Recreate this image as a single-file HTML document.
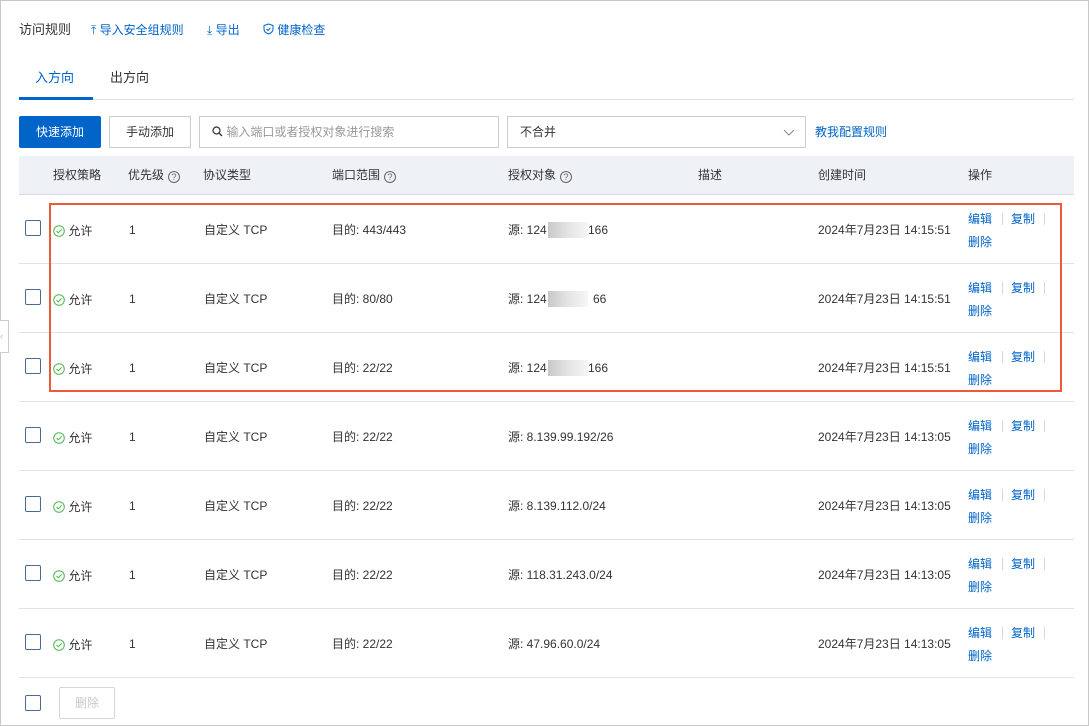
<!DOCTYPE html>
<html><head><meta charset="utf-8"><style>
*{margin:0;padding:0;box-sizing:border-box}
body{width:1089px;height:726px;background:#fff;font-family:"Liberation Sans","Noto Sans CJK SC",sans-serif;font-size:12px;color:#333;position:relative;overflow:hidden}
.frame{position:absolute;left:0;top:0;width:1089px;height:726px;border:1px solid #c8c8c8}
.a{position:absolute;white-space:nowrap;line-height:16px}
.blue{color:#0064c8}
.cb{position:absolute;width:16px;height:16px;border:1px solid #4a6a8f;border-radius:2px;background:#fff}
.row{position:absolute;left:19px;width:1055px;height:69px;border-bottom:1px solid #e3e3e3}
.q{display:inline-block;width:12px;height:12px;border:1px solid #666;border-radius:50%;font-size:9px;line-height:10px;text-align:center;margin-left:4px;vertical-align:-1px;color:#666}
.sep{position:absolute;width:1px;height:12px;background:#d8d8d8}
</style></head><body>
<div class="frame"></div>
<div class="a" style="left:19px;top:22px;font-size:13px;color:#333">访问规则</div>
<div class="a blue" style="left:91px;top:22px">⤒ 导入安全组规则</div>
<div class="a blue" style="left:207px;top:22px">⤓ 导出</div>
<div class="a blue" style="left:263px;top:22px">
<svg width="11" height="12" viewBox="0 0 11 12" style="vertical-align:-1px"><path d="M5.5 1L10 2.5V6c0 2.5-2 4.2-4.5 5C3 10.2 1 8.5 1 6V2.5z M3.5 6l1.5 1.5L7.5 4.8" fill="none" stroke="#0064c8" stroke-width="1"/></svg> 健康检查</div>
<div class="a blue" style="left:35px;top:70px;font-size:13px">入方向</div>
<div class="a" style="left:110px;top:70px;font-size:13px">出方向</div>
<div class="a" style="left:19px;top:99px;width:1055px;height:1px;background:#e3e3e3"></div>
<div class="a" style="left:19px;top:97px;width:74px;height:3px;background:#0064c8"></div>
<div class="a" style="left:19px;top:116px;width:82px;height:32px;background:#0064c8;color:#fff;text-align:center;line-height:32px;border-radius:2px">快速添加</div>
<div class="a" style="left:109px;top:116px;width:82px;height:32px;border:1px solid #ccc;text-align:center;line-height:30px">手动添加</div>
<div class="a" style="left:199px;top:116px;width:300px;height:32px;border:1px solid #ccc;line-height:30px;padding-left:12px;color:#999">
<svg width="11" height="11" viewBox="0 0 11 11" style="vertical-align:-1px"><circle cx="4.5" cy="4.5" r="3.5" fill="none" stroke="#333" stroke-width="1.2"/><path d="M7 7l3 3" stroke="#333" stroke-width="1.3"/></svg> 输入端口或者授权对象进行搜索</div>
<div class="a" style="left:507px;top:116px;width:299px;height:32px;border:1px solid #ccc;line-height:30px;padding-left:12px">不合并
<svg width="12" height="8" viewBox="0 0 12 8" style="position:absolute;right:10px;top:12px"><path d="M1 1l5 5 5-5" fill="none" stroke="#888" stroke-width="1"/></svg></div>
<div class="a blue" style="left:815px;top:124px">教我配置规则</div>
<div class="a" style="left:19px;top:156px;width:1055px;height:39px;background:#eef1f6;border-bottom:1px solid #d8dbe0"></div>
<div class="a" style="left:53px;top:167px">授权策略</div>
<div class="a" style="left:128px;top:167px">优先级<span class="q">?</span></div>
<div class="a" style="left:203px;top:167px">协议类型</div>
<div class="a" style="left:332px;top:167px">端口范围<span class="q">?</span></div>
<div class="a" style="left:508px;top:167px">授权对象<span class="q">?</span></div>
<div class="a" style="left:698px;top:167px">描述</div>
<div class="a" style="left:818px;top:167px">创建时间</div>
<div class="a" style="left:968px;top:167px">操作</div>
<div id="rows"></div>
<script>
var d=[["443/443","124.xxx.166","14:15:51"],["80/80","124.xx66","14:15:51"],["22/22","124.xxx.166","14:15:51"],["22/22","8.139.99.192/26","14:13:05"],["22/22","8.139.112.0/24","14:13:05"],["22/22","118.31.243.0/24","14:13:05"],["22/22","47.96.60.0/24","14:13:05"]];
var h="";
d.forEach(function(r,i){var t=195+69*i;var y=t+27;
h+='<div class="row" style="top:'+t+'px"></div>';
h+='<div class="cb" style="left:25px;top:'+(t+25)+'px"></div>';
h+='<div class="a" style="left:53px;top:'+(y+1)+'px"><svg width="12" height="12" viewBox="0 0 12 12" style="vertical-align:-2px"><circle cx="6" cy="6" r="5.3" fill="none" stroke="#4cb84c" stroke-width="1"/><path d="M3.5 6l1.8 1.8L8.6 4.4" fill="none" stroke="#4cb84c" stroke-width="1"/></svg> 允许</div>';
h+='<div class="a" style="left:129px;top:'+y+'px">1</div>';
h+='<div class="a" style="left:204px;top:'+y+'px">自定义 TCP</div>';
h+='<div class="a" style="left:332px;top:'+y+'px">目的: '+r[0]+'</div>';
if(i<3){h+='<div class="a" style="left:508px;top:'+y+'px">源: 124</div><div class="a" style="left:548px;top:'+(y)+'px;width:40px;height:16px;background:linear-gradient(90deg,#c8c8c8,#e4e4e4,#f6f6f6)"></div><div class="a" style="left:'+(i==1?593:588)+'px;top:'+y+'px">'+(i==1?'66':'166')+'</div>';}
else h+='<div class="a" style="left:508px;top:'+y+'px">源: '+r[1]+'</div>';
h+='<div class="a" style="left:818px;top:'+y+'px">2024年7月23日 '+r[2]+'</div>';
h+='<div class="a blue" style="left:968px;top:'+(t+16)+'px">编辑</div><div class="sep" style="left:1002px;top:'+(t+18)+'px"></div><div class="a blue" style="left:1011px;top:'+(t+16)+'px">复制</div><div class="sep" style="left:1044px;top:'+(t+18)+'px"></div>';
h+='<div class="a blue" style="left:968px;top:'+(t+39)+'px">删除</div>';
});
document.getElementById("rows").innerHTML=h;
</script>
<div class="a" style="left:49px;top:203px;width:1013px;height:189px;border:2px solid #ec5a3c"></div>
<div class="a" style="left:0;top:320px;width:9px;height:33px;border:1px solid #ccc;border-left:none;background:#fff;color:#bbb;font-size:9px;line-height:31px">‹</div>
<div class="cb" style="left:25px;top:695px"></div>
<div class="a" style="left:59px;top:687px;width:56px;height:32px;border:1px solid #d5d5d5;border-radius:2px;color:#c8c8c8;text-align:center;line-height:30px">删除</div>
</body></html>
